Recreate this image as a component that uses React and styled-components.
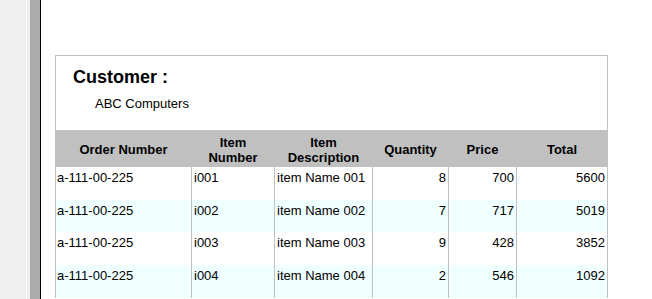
import React from "react";
import styled, { createGlobalStyle } from "styled-components";

const Global = createGlobalStyle`
  html, body { margin: 0; padding: 0; background: #ffffff; }
  body { font-family: "Liberation Sans", Arial, sans-serif; color: #000; }
  * { box-sizing: border-box; }
`;

const Page = styled.div`
  display: flex;
  height: 299px;
  overflow: hidden;
`;

const Sidebar = styled.div`
  width: 27px;
  flex: none;
  background: #efefef;
  border-right: 1px solid #ffffff;
`;

const Gutter = styled.div`
  width: 3px;
  flex: none;
  background: #efefef;
`;

const Rail = styled.div`
  width: 11px;
  flex: none;
  background: #ababab;
  border-right: 1px solid #000000;
`;

const Main = styled.main`
  flex: 1;
  background: #ffffff;
  padding: 55px 0 0 14px;
`;

const Card = styled.section`
  width: 553px;
  border: 1px solid #c0c0c0;
  border-bottom: none;
  background: #fff;
`;

const CustomerBlock = styled.div`
  padding: 11px 0 19px 17px;
`;

const Title = styled.h2`
  margin: 0;
  font-size: 18px;
  line-height: 21px;
  font-weight: bold;
`;

const CustomerName = styled.div`
  margin: 8px 0 0 22px;
  font-size: 13px;
  line-height: 15px;
`;

const Table = styled.table`
  width: 551px;
  table-layout: fixed;
  border-collapse: separate;
  border-spacing: 0;
  font-size: 13px;
  line-height: 15px;
`;

const HeadCell = styled.th`
  width: ${(p) => p.$w}px;
  height: 37px;
  padding: 2px 2px 0;
  background: #c0c0c0;
  font-weight: bold;
  text-align: center;
  vertical-align: middle;
  border-left: ${(p) => (p.$first ? "none" : "1px solid #c0c0c0")};
`;

const Row = styled.tr`
  background: ${(p) => (p.$alt ? "#f0ffff" : "#ffffff")};
`;

const Cell = styled.td`
  height: ${(p) => p.$h}px;
  padding: 3px 2px 0 ${(p) => (p.$first ? 1 : 2)}px;
  vertical-align: top;
  text-align: ${(p) => (p.$num ? "right" : "left")};
  border-left: ${(p) => (p.$first ? "none" : "1px solid #c0c0c0")};
  white-space: nowrap;
  overflow: hidden;
`;

const columns = [
  { label: "Order Number", w: 135 },
  { label: ["Item", "Number"], w: 83 },
  { label: ["Item", "Description"], w: 98 },
  { label: "Quantity", w: 76 },
  { label: "Price", w: 68 },
  { label: "Total", w: 91 },
];

const rows = [
  ["a-111-00-225", "i001", "item Name 001", 8, 700, 5600],
  ["a-111-00-225", "i002", "item Name 002", 7, 717, 5019],
  ["a-111-00-225", "i003", "item Name 003", 9, 428, 3852],
  ["a-111-00-225", "i004", "item Name 004", 2, 546, 1092],
];

const heights = [33, 32, 33, 33];

export default function App() {
  return (
    <>
      <Global />
      <Page>
        <Sidebar />
        <Gutter />
        <Rail />
        <Main>
          <Card>
            <CustomerBlock>
              <Title>Customer :</Title>
              <CustomerName>ABC Computers</CustomerName>
            </CustomerBlock>
            <Table>
              <thead>
                <tr>
                  {columns.map((c, i) => (
                    <HeadCell key={i} $w={c.w} $first={i === 0}>
                      {Array.isArray(c.label) ? (
                        <>
                          {c.label[0]}
                          <br />
                          {c.label[1]}
                        </>
                      ) : (
                        c.label
                      )}
                    </HeadCell>
                  ))}
                </tr>
              </thead>
              <tbody>
                {rows.map((r, ri) => (
                  <Row key={ri} $alt={ri % 2 === 1}>
                    {r.map((v, ci) => (
                      <Cell
                        key={ci}
                        $h={heights[ri]}
                        $first={ci === 0}
                        $num={typeof v === "number"}
                      >
                        {v}
                      </Cell>
                    ))}
                  </Row>
                ))}
              </tbody>
            </Table>
          </Card>
        </Main>
      </Page>
    </>
  );
}
